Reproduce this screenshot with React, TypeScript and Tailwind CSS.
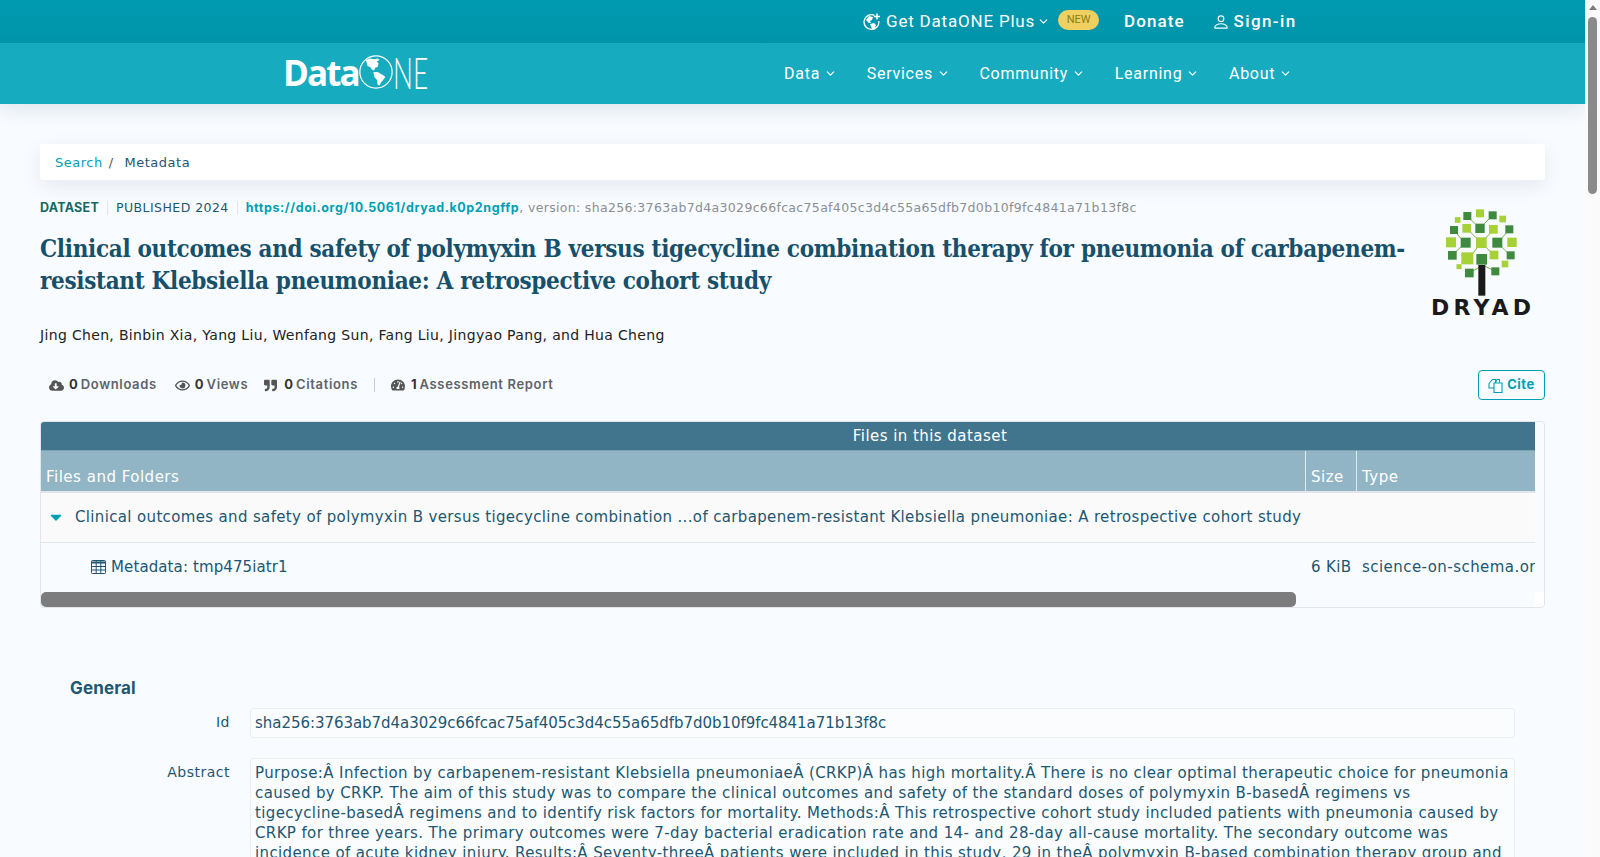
import React from 'react';
import { ChevronDown } from 'lucide-react';
import { FaCloudDownloadAlt, FaRegEye, FaQuoteRight, FaTachometerAlt, FaCaretDown } from 'react-icons/fa';
import { BsPerson } from 'react-icons/bs';

const NAV = ['Data', 'Services', 'Community', 'Learning', 'About'];

const HASH = 'sha256:3763ab7d4a3029c66fcac75af405c3d4c55a65dfb7d0b10f9fc4841a71b13f8c';

const ABSTRACT = [
    'Purpose:Â Infection by carbapenem-resistant Klebsiella pneumoniaeÂ (CRKP)Â has high mortality.Â There is no clear optimal therapeutic choice for pneumonia',
    'caused by CRKP. The aim of this study was to compare the clinical outcomes and safety of the standard doses of polymyxin B-basedÂ regimens vs',
    'tigecycline-basedÂ regimens and to identify risk factors for mortality. Methods:Â This retrospective cohort study included patients with pneumonia caused by',
    'CRKP for three years. The primary outcomes were 7-day bacterial eradication rate and 14- and 28-day all-cause mortality. The secondary outcome was',
    'incidence of acute kidney injury. Results:Â Seventy-threeÂ patients were included in this study, 29 in theÂ polymyxin B-based combination therapy group and',
];

function GlobeLogo() {
    return (
        <svg width="34" height="34" viewBox="0 0 40 40" className="shrink-0">
            <circle cx="20" cy="20" r="19" fill="none" stroke="#fff" strokeWidth="1.4" />
            <path d="M8 6l5-2 5 1 4-1 2 2-3 2 2 2-1 4-3 1-1 3-2 0-3-4-3-1-1-4z" fill="#fff" />
            <path d="M17 20l5 0 7 4 2 2-3 4-2 2-2 4-2-1-1-6-3-3z" fill="#fff" />
        </svg>
    );
}

function PlusGlobe() {
    return (
        <svg width="18" height="18" viewBox="0 0 18 18" className="shrink-0">
            <path d="M11.5 2.3A7.4 7.4 0 1 0 15.8 8" fill="none" stroke="#fff" strokeWidth="1.3" />
            <path d="M3 7l3-4 4 1-1 3-2 1 1 2-2 0zM7 11l4-1 2 2-2 5-2-1z" fill="#fff" />
            <path d="M14 0.5v6M11 3.5h6" stroke="#fff" strokeWidth="1.5" />
        </svg>
    );
}

function CiteIcon() {
    return (
        <svg width="15" height="15" viewBox="0 0 15 15" fill="none" stroke="#009fb5" strokeWidth="1.1" className="shrink-0">
            <path d="M1 5.5L4.5 1.5H7.5V10H1z" />
            <path d="M7.5 4.5L9 1.5h2.5v3" />
            <path d="M6 5h8v9.5H6z" fill="#f8fbff" />
        </svg>
    );
}

function TableIcon() {
    return (
        <svg width="15" height="14" viewBox="0 0 15 14" fill="none" stroke="currentColor" strokeWidth="1" className="shrink-0 -mt-[2px]">
            <rect x="0.5" y="0.5" width="14" height="13" rx="1" />
            <path d="M0.5 2.5h14" strokeWidth="2" />
            <path d="M0.5 6.5h14M0.5 10h14M5.2 1v12M9.8 1v12" />
        </svg>
    );
}

function DryadLogo() {
    const dark = '#3f8a3f';
    const light = '#a6d137';
    // centre x, centre y, side
    const squares: [number, number, number, string][] = [
        [180, 40, 24, light], [142, 48, 24, dark], [218, 46, 24, dark], [113, 60, 17, light], [248, 57, 20, light],
        [102, 90, 24, dark], [140, 85, 26, light], [180, 85, 28, dark], [220, 88, 26, light], [268, 88, 24, dark],
        [93, 127, 30, light], [137, 128, 30, dark], [184, 128, 32, light], [232, 128, 30, dark], [276, 127, 28, light],
        [97, 166, 26, dark], [142, 175, 36, light], [222, 165, 26, light], [272, 166, 24, dark],
        [117, 200, 15, light], [255, 192, 20, light], [148, 219, 26, dark], [226, 214, 24, dark],
    ];
    return (
        <div className="flex flex-col items-start w-[110px] shrink-0">
            <svg width="110" height="97" viewBox="0 0 330 291" className="block">
                <path d="M142 48l25 25M218 46l-25 25M102 90l20 25M268 88l-24 28M184 128L150 170M184 128l30 30M137 128L102 160M232 128l30 30M148 219l35-20M226 214l-30-15M140 85l30 30M220 88l-24 28" stroke="#7fb24a" strokeWidth="3" fill="none" />
                {squares.map(([x, y, s, c], i) => <rect key={i} x={x - s / 2} y={y - s / 2} width={s} height={s} fill={c} />)}
                <rect x="175" y="195" width="21" height="92" fill="#1a1a1a" />
                <rect x="169" y="162" width="32" height="32" fill={dark} />
            </svg>
            <div className="mt-[2px] ml-[11px] text-[#1a1a1a] text-[22px] leading-[18px] font-bold tracking-[4.2px] whitespace-nowrap font-['DejaVu_Sans',sans-serif]">DRYAD</div>
        </div>
    );
}

function Stat({ icon, count, label }: { icon: React.ReactNode; count: string; label: string }) {
    return (
        <div className="flex items-center text-[13px] font-semibold text-[#5f6368] tracking-[0.65px] font-['Inter',sans-serif]">
            <span className="w-[20px] flex justify-start text-[#555]">{icon}</span>
            <span className="font-bold text-[#333] mr-[3px] tracking-normal">{count}</span>
            <span>{label}</span>
        </div>
    );
}

export default function App() {
    return (
        <div className="flex h-[857px] w-[1600px] overflow-hidden bg-[#f8fbff] text-[#1d5770] font-['DejaVu_Sans','Inter',sans-serif]">
            <div className="w-[1585px] shrink-0 flex flex-col">
                {/* Header */}
                <header className="shadow-[0_4px_20px_rgba(0,60,80,0.12)]">
                    <div className="h-[43px] bg-gradient-to-b from-[#009ab0] to-[#0094aa] flex items-center text-white font-['Roboto',sans-serif]">
                        <div className="ml-[863px] flex items-center text-[17px] tracking-[0.8px]">
                            <PlusGlobe />
                            <span className="ml-[5px]">Get DataONE Plus</span>
                            <ChevronDown size={13} strokeWidth={2} className="ml-[2px]" />
                            <span className="ml-[8px] h-[20px] w-[41px] rounded-[10px] bg-[#f0d060] text-[#8e7a16] text-[11px] tracking-normal flex items-center justify-center -mt-[3px]">NEW</span>
                        </div>
                        <span className="ml-[25px] pt-px text-[17px] font-medium tracking-[1.05px]">Donate</span>
                        <BsPerson size={18} className="ml-[27px]" />
                        <span className="ml-[4px] pt-px text-[17px] font-medium tracking-[1.4px]">Sign-in</span>
                    </div>
                    <div className="h-[61px] bg-[#17abc0] flex items-center text-white">
                        <div className="ml-[283px] -mt-[3px] flex items-center w-[146px]">
                            <span className="text-[35px] leading-none font-bold tracking-[-1.9px] font-['Open_Sans',sans-serif]">Data</span>
                            <GlobeLogo />
                            <span className="inline-block origin-left scale-x-[0.6] text-[44px] leading-none font-light font-['Lato','Inter',sans-serif]">NE</span>
                        </div>
                        <nav className="ml-[355px] flex items-center gap-[29.5px] text-[16px] tracking-[0.75px] font-['Roboto',sans-serif]">
                            {NAV.map(item => (
                                <div key={item} className="flex items-center gap-[4px]">
                                    <span>{item}</span>
                                    <ChevronDown size={13} strokeWidth={2} />
                                </div>
                            ))}
                        </nav>
                    </div>
                </header>

                <main className="px-[40px] pt-[40px] flex-1 min-h-0 overflow-hidden">
                    {/* Breadcrumb */}
                    <div className="h-[36px] bg-white rounded-[3px] shadow-[0_6px_20px_rgba(0,40,70,0.08)] flex items-center px-[15px] pt-px text-[13px] tracking-[0.5px]">
                        <span className="text-[#009fb5]">Search</span>
                        <span className="ml-[6px] text-[#555]">/</span>
                        <span className="ml-[11px]">Metadata</span>
                    </div>

                    {/* Citation header */}
                    <div className="flex mt-[19px]">
                        <div className="flex-1 min-w-0">
                            <div className="flex items-center text-[12.5px] leading-[18px] h-[18px] whitespace-nowrap">
                                <span className="font-bold text-[#17695f] font-['Inter',sans-serif] tracking-[0.25px]">DATASET</span>
                                <span className="mx-[8px] h-[14px] w-px bg-[#dfe5ea]"></span>
                                <span className="tracking-[0.44px]">PUBLISHED 2024</span>
                                <span className="mx-[8px] h-[14px] w-px bg-[#dfe5ea]"></span>
                                <span className="font-bold text-[#009fb5] font-['Inter',sans-serif] tracking-[0.6px]">https://doi.org/10.5061/dryad.k0p2ngffp</span>
                                <span className="text-[#8a8f94] tracking-[0.33px]">, version: {HASH}</span>
                            </div>
                            <h1 className="mt-[16px] w-[1372px] text-[24px] leading-[32px] font-bold text-[#17506a] font-['DejaVu_Serif_Condensed','DejaVu_Serif',serif] tracking-[-0.32px]">
                                Clinical outcomes and safety of polymyxin B versus tigecycline combination therapy for pneumonia of carbapenem-resistant Klebsiella pneumoniae: A retrospective cohort study
                            </h1>
                            <p className="mt-[28px] text-[14px] leading-[20px] text-[#222] tracking-[0.33px]">
                                Jing Chen, Binbin Xia, Yang Liu, Wenfang Sun, Fang Liu, Jingyao Pang, and Hua Cheng
                            </p>
                        </div>
                        <div className="shrink-0 w-[110px] mt-px mr-[15px]">
                            <DryadLogo />
                        </div>
                    </div>

                    {/* Stats */}
                    <div className="flex items-center mt-[25px] h-[30px]">
                        <div className="flex items-center ml-[9px]">
                            <Stat icon={<FaCloudDownloadAlt size={15} />} count="0" label="Downloads" />
                            <div className="ml-[18px]"><Stat icon={<FaRegEye size={15} />} count="0" label="Views" /></div>
                            <div className="ml-[16px]"><Stat icon={<FaQuoteRight size={13} />} count="0" label="Citations" /></div>
                            <span className="mx-[16px] h-[14px] w-px bg-[#c9ced3]"></span>
                            <Stat icon={<FaTachometerAlt size={14} />} count="1" label="Assessment Report" />
                        </div>
                        <button className="ml-auto h-[30px] w-[67px] rounded-[4px] border border-[#009fb5] flex items-center justify-center gap-[4px] text-[13px] font-bold text-[#009fb5] tracking-[0.5px] font-['Inter',sans-serif]">
                            <CiteIcon />
                            Cite
                        </button>
                    </div>

                    {/* Files table */}
                    <div className="mt-[21px] h-[187px] rounded-[4px] border border-[#e2e6ea] overflow-hidden">
                        <div className="w-[1494px] overflow-hidden">
                            <div className="w-[1778px]">
                                <div className="h-[28px] bg-[#41758d] text-white text-[15px] tracking-[0.45px] flex items-center justify-center">
                                    Files in this dataset
                                </div>
                                <div className="h-[41px] bg-[#91b5c5] border-t border-[#7fa3b3] flex text-white text-[15px] tracking-[0.5px]">
                                    <div className="w-[1264px] flex items-end px-[5px] pb-[3px]">Files and Folders</div>
                                    <div className="w-[51px] border-l border-[#dfe9ee] flex items-end px-[5px] pb-[3px]">Size</div>
                                    <div className="flex-1 border-l border-[#dfe9ee] flex items-end px-[5px] pb-[3px]">Type</div>
                                </div>
                                <div className="h-[52px] bg-[#fafafa] border-t-2 border-[#e2e5e8] border-b flex items-center text-[15px] tracking-[0.35px] whitespace-nowrap">
                                    <FaCaretDown size={18} className="ml-[6px] -mt-[2px] text-[#009fb5]" />
                                    <span className="ml-[10px]">Clinical outcomes and safety of polymyxin B versus tigecycline combination ...of carbapenem-resistant Klebsiella pneumoniae: A retrospective cohort study</span>
                                </div>
                                <div className="h-[49px] flex items-center text-[15px] whitespace-nowrap">
                                    <div className="w-[1264px] flex items-center pl-[50px]">
                                        <TableIcon />
                                        <span className="ml-[5px] tracking-[0.11px]">Metadata: tmp475iatr1</span>
                                    </div>
                                    <div className="w-[51px] pl-[6px] shrink-0 tracking-[0.35px]">6 KiB</div>
                                    <div className="pl-[6px] tracking-[0.45px]">science-on-schema.org</div>
                                </div>
                            </div>
                        </div>
                        <div className="h-[15px] flex">
                            <div className="w-[1255px] rounded-[5px] bg-[#7c7c7e]"></div>
                            <div className="ml-auto w-[10px] bg-white"></div>
                        </div>
                    </div>

                    {/* General */}
                    <section className="mt-[68px]">
                        <h2 className="ml-[30px] text-[17px] leading-[24px] font-bold font-['Inter',sans-serif] tracking-[0.15px]">General</h2>
                        <div className="mt-[8px] flex items-start">
                            <div className="w-[190px] text-right text-[14px] leading-[28px] tracking-[0.5px]">Id</div>
                            <div className="ml-[20px] w-[1265px] h-[30px] px-[4px] rounded-[3px] border border-[#eceff2] bg-[#fbfcfd] text-[15px] leading-[28px] -tracking-[0.04px]">{HASH}</div>
                        </div>
                        <div className="mt-[20px] flex items-start">
                            <div className="w-[190px] text-right text-[14px] leading-[28px] tracking-[0.5px]">Abstract</div>
                            <div className="ml-[20px] w-[1265px] h-[120px] px-[4px] pt-[4px] rounded-[3px] border border-[#eceff2] bg-[#fbfcfd] text-[15px] leading-[20px] tracking-[0.38px] whitespace-nowrap overflow-hidden">
                                {ABSTRACT.map(line => <div key={line}>{line}</div>)}
                            </div>
                        </div>
                    </section>
                </main>
            </div>

            {/* Page scrollbar */}
            <div className="w-[15px] shrink-0 bg-[#fafafa] flex flex-col items-center">
                <div className="mt-[5px] h-0 w-0 border-x-[4px] border-x-transparent border-b-[5px] border-b-[#7c7c7c]"></div>
                <div className="mt-[7px] w-[9px] h-[177px] rounded-[5px] bg-[#8a8a8a]"></div>
            </div>
        </div>
    );
}
